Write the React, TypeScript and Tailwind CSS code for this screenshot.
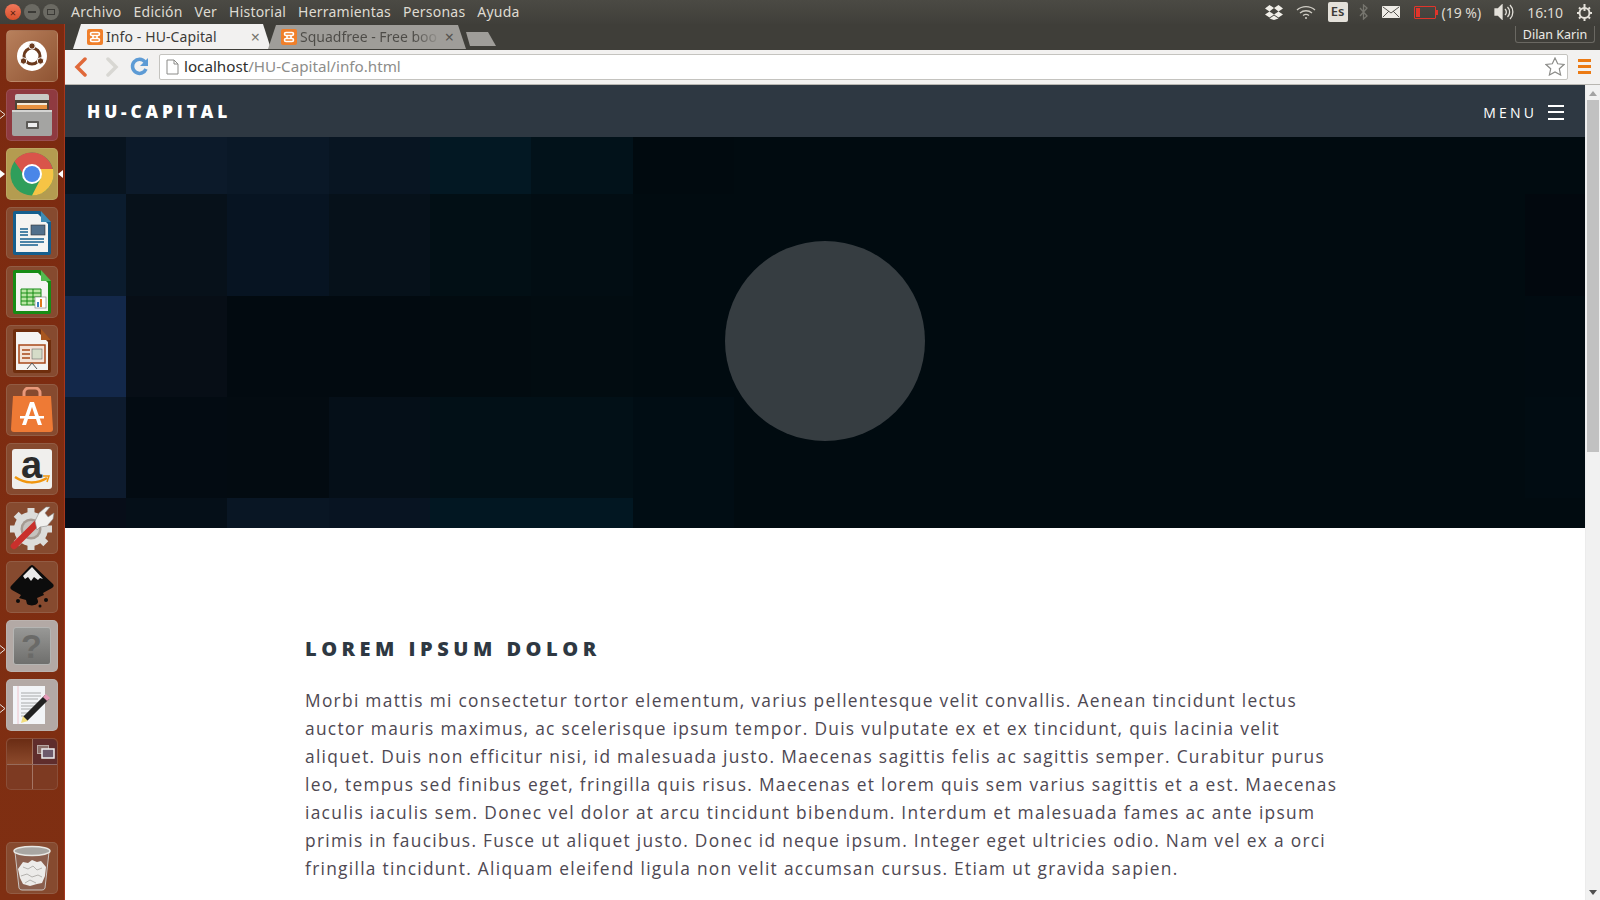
import { ReactNode } from "react";

const ui = "font-['Noto_Sans',sans-serif]";

const heroCells = [
  "bg-[#08141f]", "bg-[#0c1a2a]", "bg-[#0a1827]", "bg-[#081522]", "bg-[#031823]", "bg-[#02121a]", "bg-[#010a0f]", "bg-[#010b10]", "bg-[#010b10]",
  "bg-[#0b1c2e]", "bg-[#07111a]", "bg-[#071422]", "bg-[#06111a]", "bg-[#020f15]", "bg-[#020d13]", "bg-[#010b10]", "bg-[#010b10]", "bg-[#02080e]",
  "bg-[#13284a]", "bg-[#070e16]", "bg-[#020a10]", "bg-[#020a10]", "bg-[#020b10]", "bg-[#020c11]", "bg-[#010b10]", "bg-[#010b10]", "bg-[#010b11]",
  "bg-[#0d1b2e]", "bg-[#030b12]", "bg-[#030b11]", "bg-[#050f18]", "bg-[#021017]", "bg-[#021017]", "bg-[#010d14]", "bg-[#010b10]", "bg-[#010c12]",
  "bg-[#070d18]", "bg-[#050f18]", "bg-[#091624]", "bg-[#081422]", "bg-[#021722]", "bg-[#021722]", "bg-[#010d14]", "bg-[#010b10]", "bg-[#010b10]",
];

function Tile({ className, children }: { className: string; children: ReactNode }) {
  return (
    <div className={"w-[52px] h-[52px] shrink-0 rounded-[5px] flex items-center justify-center border border-white/10 " + className}>
      {children}
    </div>
  );
}

function UbuntuIcon() {
  return (
    <svg width="36" height="36" viewBox="0 0 36 36">
      <circle cx="18" cy="18" r="15" fill="#fff" />
      <circle cx="18" cy="18" r="8" fill="none" stroke="#6a3a1e" strokeWidth="3" />
      <circle cx="18" cy="8" r="3.200" fill="#6a3a1e" stroke="#fff" />
      <circle cx="9.500" cy="23" r="3.200" fill="#6a3a1e" stroke="#fff" />
      <circle cx="26.500" cy="23" r="3.200" fill="#6a3a1e" stroke="#fff" />
    </svg>
  );
}

function FilesIcon() {
  return (
    <svg width="42" height="44" viewBox="0 0 42 44">
      <path d="M4 3a2 2 0 0 1 2-2h30a2 2 0 0 1 2 2v38H4z" fill="#c9c9c7" />
      <rect x="4" y="7" width="34" height="12" fill="#4d4338" />
      <rect x="6" y="10" width="30" height="2" fill="#f3ead8" />
      <rect x="6" y="12" width="30" height="4" fill="#e8923f" />
      <path d="M1 17h40v24a2 2 0 0 1-2 2H3a2 2 0 0 1-2-2z" fill="#a4a4a2" />
      <path d="M1 17h40v2H1z" fill="#d4d4d2" />
      <rect x="15" y="28" width="13" height="8" rx="1" fill="#5c5a56" />
      <rect x="17" y="30" width="9" height="4" fill="#eee" />
    </svg>
  );
}

function ChromeIcon() {
  return (
    <svg width="44" height="44" viewBox="0 0 44 44">
      <circle cx="22" cy="22" r="21.500" fill="#2f9e5b" />
      <path d="M22 .5A21.500 21.500 0 0 1 43 18H22a8 8 0 0 0-8 5L4.500 9.500A21.500 21.500 0 0 1 22 .5z" fill="#d9544a" />
      <path d="M43 17a21.500 21.500 0 0 1-21 26.500L31 26a9 9 0 0 0-3-9z" fill="#f6c445" />
      <circle cx="22" cy="22" r="10" fill="#fff" />
      <circle cx="22" cy="22" r="8" fill="#4a86e8" />
    </svg>
  );
}

function DocIcon({ edge, corner, children }: { edge: string; corner: string; children: ReactNode }) {
  return (
    <svg width="40" height="46" viewBox="0 0 40 46">
      <path d="M1 3a2 2 0 0 1 2-2h25l11 11v31a2 2 0 0 1-2 2H3a2 2 0 0 1-2-2z" fill={edge} />
      <path d="M4 4h22l10 10v28H4z" fill="#f4f4f2" />
      <path d="M29 1l10 11h-10z" fill={corner} />
      {children}
    </svg>
  );
}

function StoreIcon() {
  return (
    <svg width="42" height="46" viewBox="0 0 42 46">
      <path d="M13 12V6a5 5 0 0 1 5-5h6a5 5 0 0 1 5 5v6" fill="none" stroke="#e9987a" strokeWidth="3" />
      <path d="M2 9h38l2 33a3 3 0 0 1-3 3H3a3 3 0 0 1-3-3z" fill="#ee7a35" />
      <path d="M19 15h4l8 23h-4l-2-6h-8l-2 6h-4zM21 20l-3 9h6z" fill="#fff" />
      <rect x="9" y="29" width="24" height="2.500" fill="#fff" />
    </svg>
  );
}

function AmazonIcon() {
  return (
    <div className="w-[40px] h-[40px] rounded-[3px] bg-[#f0efed] relative flex justify-center font-['Liberation_Sans',sans-serif] font-bold text-[38px] leading-[32px] text-[#2b2b2b]">
      a
      <svg className="absolute left-[2px] bottom-[3px]" width="36" height="11" viewBox="0 0 36 11">
        <path d="M1 2c10 7 22 7 32 1" fill="none" stroke="#f0960e" strokeWidth="2.500" />
        <path d="M29 1l6 0-2 6" fill="none" stroke="#f0960e" strokeWidth="1.500" />
      </svg>
    </div>
  );
}

function SettingsIcon() {
  return (
    <svg width="48" height="48" viewBox="0 0 48 48">
      <circle cx="23" cy="25" r="17" fill="#dcdcda" />
      <path d="M23 4V46M2 25H44M8.200 10.200L37.800 39.800M8.200 39.800L37.800 10.200" stroke="#dcdcda" strokeWidth="7" />
      <circle cx="23" cy="25" r="10.500" fill="#a59a92" />
      <circle cx="23" cy="25" r="8" fill="#c6c2be" />
      <path d="M6 42L30 18" stroke="#c9302c" strokeWidth="6.500" strokeLinecap="round" />
      <path d="M27 17l4-8 7-6 4 0-5 6 3 4 6-4-1 6-6 7-7 1-3 3z" fill="#f0f0ee" stroke="#8a8a88" strokeWidth=".6" />
    </svg>
  );
}

function InkscapeIcon() {
  return (
    <svg width="46" height="46" viewBox="0 0 46 46">
      <path d="M23 1c1 0 2 1 3 2l18 17c1 1 1 3-1 4l-9 5 1 2-7 3 1 3c1 4-7 6-11 3l-1-4-7-2 2-3-9-5c-2-1-2-3-1-4L20 3c1-1 2-2 3-2z" fill="#0c0c0c" />
      <path d="M23 3l-9 9 2 3 3-2 3 4 3-4 4 3 2-2 3 1z" fill="#e9e9e9" />
      <circle cx="9" cy="37" r="2" fill="#0c0c0c" />
      <circle cx="37" cy="36" r="2" fill="#0c0c0c" />
      <circle cx="31" cy="42" r="1.500" fill="#0c0c0c" />
    </svg>
  );
}

function HelpIcon() {
  return (
    <div className="w-[38px] h-[38px] rounded-[3px] bg-gradient-to-b from-[#989896] to-[#6f6f6d] border border-[#b5b5b3] flex items-center justify-center font-['Liberation_Sans',sans-serif] font-bold text-[34px] text-[#6a6a68]">
      ?
    </div>
  );
}

function EditorIcon() {
  return (
    <svg width="42" height="42" viewBox="0 0 42 42">
      <rect x="2" y="2" width="32" height="38" fill="#f2f4f7" />
      <path d="M7 2v38" stroke="#eeb8bf" strokeWidth=".8" />
      <path d="M10 9h20M10 12h20M10 15h17M10 19h20M10 22h18M10 25h12M10 29h12M10 32h9" stroke="#8a8a8a" strokeWidth=".7" />
      <path d="M14 35l22-22" stroke="#222" strokeWidth="6" />
      <path d="M34 15l3-3" stroke="#e49ab8" strokeWidth="6" />
      <path d="M10 39l2-7 5 5z" fill="#f1dc7a" />
    </svg>
  );
}

function WorkspaceIcon() {
  return (
    <div className="w-full h-full grid grid-cols-[26px_26px] grid-rows-[26px_26px] rounded-[5px] overflow-hidden">
      <div className="border-r border-b border-white/30 bg-gradient-to-b from-[#6a2c14] to-[#8c4a2c]" />
      <div className="border-b border-white/30 bg-[#5f2d2c] flex items-center justify-center">
        <svg width="18" height="14" viewBox="0 0 18 14">
          <rect x="0.500" y="0.500" width="11" height="8" fill="#8a6f6a" stroke="#b7a8a4" />
          <rect x="5" y="4" width="12" height="9" fill="#6d5a6c" stroke="#f0f0f0" strokeWidth="1.500" />
        </svg>
      </div>
      <div className="border-r border-white/30" />
      <div />
    </div>
  );
}

function TrashIcon() {
  return (
    <svg width="40" height="46" viewBox="0 0 40 46">
      <path d="M3 7l4 36a3 3 0 0 0 3 2h20a3 3 0 0 0 3-2l4-36z" fill="#8a5f4e" stroke="#c9c2be" />
      <path d="M6 24l5-7 5 1 4-3 5 2 4-1 5 6-1 9-3 7-5 1-7 2-7-2-3-6z" fill="#ecebe9" />
      <path d="M11 22l5 2 5-3 4 4 5-2M9 31l6-2 5 3 6-2 4 2M13 38l5-3 6 3" fill="none" stroke="#b4b2ae" />
      <ellipse cx="20" cy="6" rx="18" ry="4.500" fill="#a8a6a2" stroke="#e8e8e4" strokeWidth="1.500" />
    </svg>
  );
}

function Pip({ className }: { className: string }) {
  return (
    <svg className={"absolute left-0 " + className} width="6" height="9" viewBox="0 0 6 9" fill="none" stroke="#e8e4e0">
      <path d="M0 .5l5 4-5 4" />
    </svg>
  );
}

function Dock() {
  return (
    <aside className="relative w-[65px] shrink-0 h-[876px] bg-gradient-to-b from-[#7c2a10] to-[#7f2f12] border-r border-[#a5361c] flex flex-col items-center pr-[1px] pt-[6px] pb-[6px] gap-[7px]">
      <Tile className="bg-gradient-to-br from-[#b8805c] to-[#8f5433]"><UbuntuIcon /></Tile>
      <Tile className="bg-[#8f3a40]"><FilesIcon /></Tile>
      <Tile className="bg-[#b49c50]"><ChromeIcon /></Tile>
      <Tile className="bg-[#864a2f]">
        <DocIcon edge="#155f8e" corner="#3e8cb5">
          <path d="M8 19h8M8 22h8M8 25h8M8 29h24M8 32h24M8 35h18" stroke="#155f8e" strokeWidth="1.500" />
          <rect x="19" y="15" width="14" height="10" fill="#51708c" stroke="#333" strokeWidth=".6" />
        </DocIcon>
      </Tile>
      <Tile className="bg-[#864a2f]">
        <DocIcon edge="#178c15" corner="#53ba4f">
          <path d="M9 20h20v16H9zM9 24h20M9 28h20M9 32h20M15 20v16M21 20v16" fill="#b9e6a4" stroke="#178c15" strokeWidth="1" />
          <rect x="23" y="28" width="11" height="11" fill="#fff" stroke="#777" strokeWidth=".6" />
          <rect x="25" y="33" width="2" height="5" fill="#3e7fc0" />
          <rect x="28" y="30" width="2" height="8" fill="#e07a1f" />
        </DocIcon>
      </Tile>
      <Tile className="bg-[#864a2f]">
        <DocIcon edge="#6f2e0d" corner="#a8561f">
          <rect x="7" y="17" width="26" height="18" fill="#f3e3d7" stroke="#a8481a" strokeWidth="1.500" />
          <path d="M10 22h8M10 26h8M10 30h8" stroke="#a8481a" strokeWidth="1.500" />
          <rect x="20" y="21" width="10" height="10" fill="#d5dcc8" stroke="#555" strokeWidth=".5" />
          <path d="M15 41l5-6 5 6" fill="none" stroke="#555" />
        </DocIcon>
      </Tile>
      <Tile className="bg-[#864a2f]"><StoreIcon /></Tile>
      <Tile className="bg-[#864a2f]"><AmazonIcon /></Tile>
      <Tile className="bg-[#864a2f]"><SettingsIcon /></Tile>
      <Tile className="bg-[#864a2f]"><InkscapeIcon /></Tile>
      <Tile className="bg-[#b3a9a5]"><HelpIcon /></Tile>
      <Tile className="bg-[#b3a9a5]"><EditorIcon /></Tile>
      <Tile className="bg-[#7d3a22]"><WorkspaceIcon /></Tile>
      <div className="mt-auto">
        <Tile className="bg-[#864a2f]"><TrashIcon /></Tile>
      </div>
      {/* running-app pips */}
      <Pip className="top-[86px]" />
      <span className="absolute left-0 top-[146px] w-0 h-0 border-y-[4px] border-y-transparent border-l-[5px] border-l-white" />
      <span className="absolute right-[1px] top-[146px] w-0 h-0 border-y-[4px] border-y-transparent border-r-[5px] border-r-white" />
      <Pip className="top-[621px]" />
      <Pip className="top-[680px]" />
    </aside>
  );
}

function WindowButtons() {
  return (
    <div className="w-[65px] shrink-0 flex items-center gap-[3px] pl-[5px]">
      <span className="w-[16px] h-[16px] rounded-full bg-gradient-to-b from-[#f0775a] to-[#d8502a] flex items-center justify-center text-[11px] leading-none text-[#5a2110]">×</span>
      <span className="w-[16px] h-[16px] rounded-full bg-[#6b6a63] flex items-center justify-center">
        <span className="w-[8px] h-[2px] bg-[#3b3a36]" />
      </span>
      <span className="w-[16px] h-[16px] rounded-full bg-[#6b6a63] flex items-center justify-center">
        <span className="w-[8px] h-[6px] border border-[#3b3a36]" />
      </span>
    </div>
  );
}

function TopPanel() {
  const menus = ["Archivo", "Edición", "Ver", "Historial", "Herramientas", "Personas", "Ayuda"];
  return (
    <div className={"h-[24px] shrink-0 flex items-center bg-gradient-to-b from-[#4b4a44] to-[#403f3a] text-[#dfdbd2] text-[14px] " + ui}>
      <WindowButtons />
      <nav className="flex gap-[12px] pl-[6px] tracking-[0.22px] -mt-[1px]">
        {menus.map((m) => (
          <span key={m}>{m}</span>
        ))}
      </nav>
      <div className="ml-auto flex items-center h-full pr-[7px]">
        <svg className="mr-[13px]" width="18" height="16" viewBox="0 0 18 16" fill="#f1efe9">
          <path d="M4.500 1L9 4 4.500 7.500 0 4.500zM13.500 1L18 4.500 13.500 7.500 9 4zM0 10.500L4.500 7.500 9 10.500 4.500 13.500zM18 10.500L13.500 7.500 9 10.500 13.500 13.500zM4.500 14.500L9 11.500l4.500 3L9 16z" />
        </svg>
        <svg className="mr-[12px]" width="20" height="14" viewBox="0 0 20 14" fill="none" stroke="#cfccc4" strokeWidth="1.300">
          <path d="M1 5c5-4.500 13-4.500 18 0M4 8c3.500-3 8.500-3 12 0M7 10.500c2-1.500 4-1.500 6 0" />
          <circle cx="10" cy="13" r="1" fill="#cfccc4" stroke="none" />
        </svg>
        <span className="w-[20px] h-[20px] mr-[11px] rounded-[2px] bg-[#e4e1da] text-[#3c3b37] text-[13px] font-semibold flex items-center justify-center">Es</span>
        <svg className="mr-[14px]" width="9" height="16" viewBox="0 0 9 16" fill="none" stroke="#77766f" strokeWidth="1.300">
          <path d="M1 4l7 8-3.500 3V1L8 4 1 12" />
        </svg>
        <svg className="mr-[14px]" width="18" height="12" viewBox="0 0 18 12">
          <rect width="18" height="12" rx="1" fill="#efece6" />
          <path d="M1 1l8 6 8-6M1 11l6-6M17 11l-6-6" fill="none" stroke="#55534e" />
        </svg>
        <span className="relative w-[22px] h-[13px] mr-[6px] border border-[#e0352b] rounded-[1px] flex items-center pl-[1px]">
          <span className="w-[4px] h-[9px] bg-[#e0352b]" />
          <span className="absolute -right-[3px] top-[3px] w-[2px] h-[5px] bg-[#e0352b]" />
        </span>
        <span className="mr-[13px] whitespace-nowrap">(19 %)</span>
        <svg className="mr-[13px]" width="20" height="16" viewBox="0 0 20 16" fill="none" stroke="#e4e1da" strokeWidth="1.300">
          <path d="M1 5h3l4-4v14l-4-4H1z" fill="#e4e1da" />
          <path d="M11 5a4 4 0 0 1 0 6M13.500 3a7 7 0 0 1 0 10M16 1a10 10 0 0 1 0 14" />
        </svg>
        <span className="mr-[13px]">16:10</span>
        <svg width="17" height="17" viewBox="0 0 17 17" fill="none" stroke="#e4e1da" strokeWidth="2">
          <circle cx="8.500" cy="9" r="5" />
          <path d="M8.500 0v7M8.500 14v3M1 9h2M14 9h2M3 3.500l1.500 1.500M14 3.500L12.500 5M3 14.500L4.500 13M14 14.500L12.500 13" />
        </svg>
      </div>
    </div>
  );
}

function Favicon() {
  return (
    <span className="w-[16px] h-[16px] shrink-0 rounded-[2px] bg-[#f07f2a] flex items-center justify-center">
      <svg width="12" height="12" viewBox="0 0 12 12" fill="none" stroke="#fff" strokeWidth="1.600">
        <path d="M3 1.500h6a1.500 1.500 0 0 1 0 3H3a1.500 1.500 0 0 1 0-3zM3 7.500h6a1.500 1.500 0 0 1 0 3H3a1.500 1.500 0 0 1 0-3zM4 4.500v3M8 4.500v3" />
      </svg>
    </span>
  );
}

function TabStrip() {
  return (
    <div className="relative h-[26px] shrink-0 bg-[#3f3e39] flex items-end pl-[8px] border-b border-[#3f3e39]">
      <div className="w-[198px] h-[25px] bg-[#f2f1f0] [clip-path:polygon(0_100%,8px_0,calc(100%-8px)_0,100%_100%)] flex items-center gap-[3px] pl-[14px] pr-[11px]">
        <Favicon />
        <span className="text-[14px] tracking-[0.1px] text-[#3c3b37] whitespace-nowrap flex-1">Info - HU-Capital</span>
        <span className="text-[16px] leading-none text-[#77766f]">×</span>
      </div>
      <div className="w-[198px] h-[24px] -ml-[3px] bg-[#9f9d99] [clip-path:polygon(0_100%,8px_0,calc(100%-8px)_0,100%_100%)] flex items-center gap-[3px] pl-[13px] pr-[12px]">
        <Favicon />
        <span className="text-[14px] -mt-[1px] whitespace-nowrap flex-1 overflow-hidden bg-gradient-to-r from-[#4d4b47] from-80% to-transparent bg-clip-text text-transparent">Squadfree - Free boo</span>
        <span className="text-[16px] leading-none text-[#55534f]">×</span>
      </div>
      <div className="w-[30px] h-[14px] mb-[3px] bg-[#9f9d99] [clip-path:polygon(0_0,22px_0,100%_100%,4px_100%)]" />
      <div className="absolute right-[5px] top-[2px] h-[17px] w-[80px] rounded-b-[3px] border border-t-0 border-[#6a6862] text-[#ecebe6] text-[12.500px] leading-[16px] text-center pt-[1px]">
        Dilan Karin
      </div>
    </div>
  );
}

function Toolbar() {
  return (
    <div className="h-[35px] shrink-0 bg-[#f2f1f0] flex items-center border-b border-[#b8b6b1] pb-[1px]">
      <svg className="ml-[9px]" width="14" height="20" viewBox="0 0 14 20" fill="none" stroke="#e0693a" strokeWidth="3.500" strokeLinecap="round">
        <path d="M11 2L3 10l8 8" />
      </svg>
      <svg className="ml-[17px]" width="14" height="20" viewBox="0 0 14 20" fill="none" stroke="#d8d7d3" strokeWidth="3.500" strokeLinecap="round">
        <path d="M3 2l8 8-8 8" />
      </svg>
      <svg className="ml-[11px]" width="19" height="19" viewBox="0 0 19 19" fill="none" stroke="#5d9bd5" strokeWidth="3.500">
        <path d="M16 12a7 7 0 1 1-1-7" />
        <path d="M18 1v8h-8z" fill="#5d9bd5" stroke="none" />
      </svg>
      <div className="ml-[10px] flex-1 h-[26px] bg-white border border-[#c4c3bf] rounded-[2px] flex items-center pl-[6px] pr-[2px]">
        <svg width="13" height="16" viewBox="0 0 13 16" fill="#fff" stroke="#8b8b88">
          <path d="M1 1h7l4 4v10H1zM8 1v4h4" />
        </svg>
        <span className="ml-[5px] text-[15.200px] -mt-[1px] text-[#2e2e2c]">localhost</span>
        <span className="text-[15.200px] -mt-[1px] text-[#8d8d8a]">/HU-Capital/info.html</span>
        <svg className="ml-auto" width="20" height="19" viewBox="0 0 20 19" fill="#fff" stroke="#8b8b88" strokeWidth="1.200">
          <path d="M10 1l2.700 5.800 6.300.7-4.700 4.300 1.300 6.200L10 15l-5.600 3 1.300-6.200L1 7.500l6.300-.7z" />
        </svg>
      </div>
      <div className="w-[32px] flex flex-col items-center gap-[3px]">
        <span className="w-[13px] h-[3px] bg-[#ec7a13]" />
        <span className="w-[13px] h-[3px] bg-[#ec7a13]" />
        <span className="w-[13px] h-[3px] bg-[#ec7a13]" />
      </div>
    </div>
  );
}

function Navbar() {
  return (
    <header className="h-[52px] shrink-0 bg-[#2e3842] flex items-center pl-[22px] pr-[21px] text-white">
      <h1 className="text-[17.300px] font-extrabold tracking-[0.225em] mt-[1px]">HU-CAPITAL</h1>
      <span className="ml-auto text-[14px] tracking-[0.225em] mt-[3px]">MENU</span>
      <div className="ml-[11px] flex flex-col gap-[4.500px] mt-[2px]">
        <span className="w-[16px] h-[2px] bg-white" />
        <span className="w-[16px] h-[2px] bg-white" />
        <span className="w-[16px] h-[2px] bg-white" />
      </div>
    </header>
  );
}

function Hero() {
  return (
    <section className="relative h-[391px] shrink-0 bg-[#010b10] grid grid-cols-[61px_101px_102px_101px_101px_102px_101px_1fr_60px] grid-rows-[57px_102px_101px_101px_30px]">
      {heroCells.map((c, i) => (
        <div key={i} className={c} />
      ))}
      <div className="absolute left-[660px] top-[104px] w-[200px] h-[200px] rounded-full bg-[#363d41]" />
    </section>
  );
}

function Scrollbar() {
  return (
    <div className="w-[15px] shrink-0 bg-[#f1f1f1] flex flex-col items-center border-l border-[#ececec]">
      <span className="mt-[6px] w-0 h-0 border-x-[4px] border-x-transparent border-b-[5px] border-b-[#a3a3a3]" />
      <div className="mt-[4px] w-[12px] h-[352px] bg-[#c1c1c1]" />
      <span className="mt-auto mb-[5px] w-0 h-0 border-x-[4px] border-x-transparent border-t-[5px] border-t-[#505050]" />
    </div>
  );
}

export default function App() {
  return (
    <div className="w-[1600px] h-[900px] overflow-hidden flex flex-col bg-white font-['Open_Sans',sans-serif]">
      <TopPanel />
      <div className="flex flex-1 min-h-0">
        <Dock />
        <div className="flex-1 min-w-0 flex flex-col">
          <div className={"flex flex-col " + ui}>
            <TabStrip />
            <Toolbar />
          </div>
          <div className="flex flex-1 min-h-0">
            <main className="flex-1 min-w-0 overflow-hidden flex flex-col">
              <Navbar />
              <Hero />
              <section className="w-[1040px] mx-auto pt-[107px]">
                <h2 className="text-[20px] leading-[27px] font-extrabold tracking-[0.225em] text-[#2e3842]">LOREM IPSUM DOLOR</h2>
                <p className="mt-[24px] text-[17.330px] leading-[28.050px] tracking-[1.3px] text-[#4e4852]">
                  Morbi mattis mi consectetur tortor elementum, varius pellentesque velit convallis. Aenean tincidunt lectus auctor mauris maximus, ac scelerisque ipsum tempor. Duis vulputate ex et ex tincidunt, quis lacinia velit aliquet. Duis non efficitur nisi, id malesuada justo. Maecenas sagittis felis ac sagittis semper. Curabitur purus leo, tempus sed finibus eget, fringilla quis risus. Maecenas et lorem quis sem varius sagittis et a est. Maecenas iaculis iaculis sem. Donec vel dolor at arcu tincidunt bibendum. Interdum et malesuada fames ac ante ipsum primis in faucibus. Fusce ut aliquet justo. Donec id neque ipsum. Integer eget ultricies odio. Nam vel ex a orci fringilla tincidunt. Aliquam eleifend ligula non velit accumsan cursus. Etiam ut gravida sapien.
                </p>
              </section>
            </main>
            <Scrollbar />
          </div>
        </div>
      </div>
    </div>
  );
}
